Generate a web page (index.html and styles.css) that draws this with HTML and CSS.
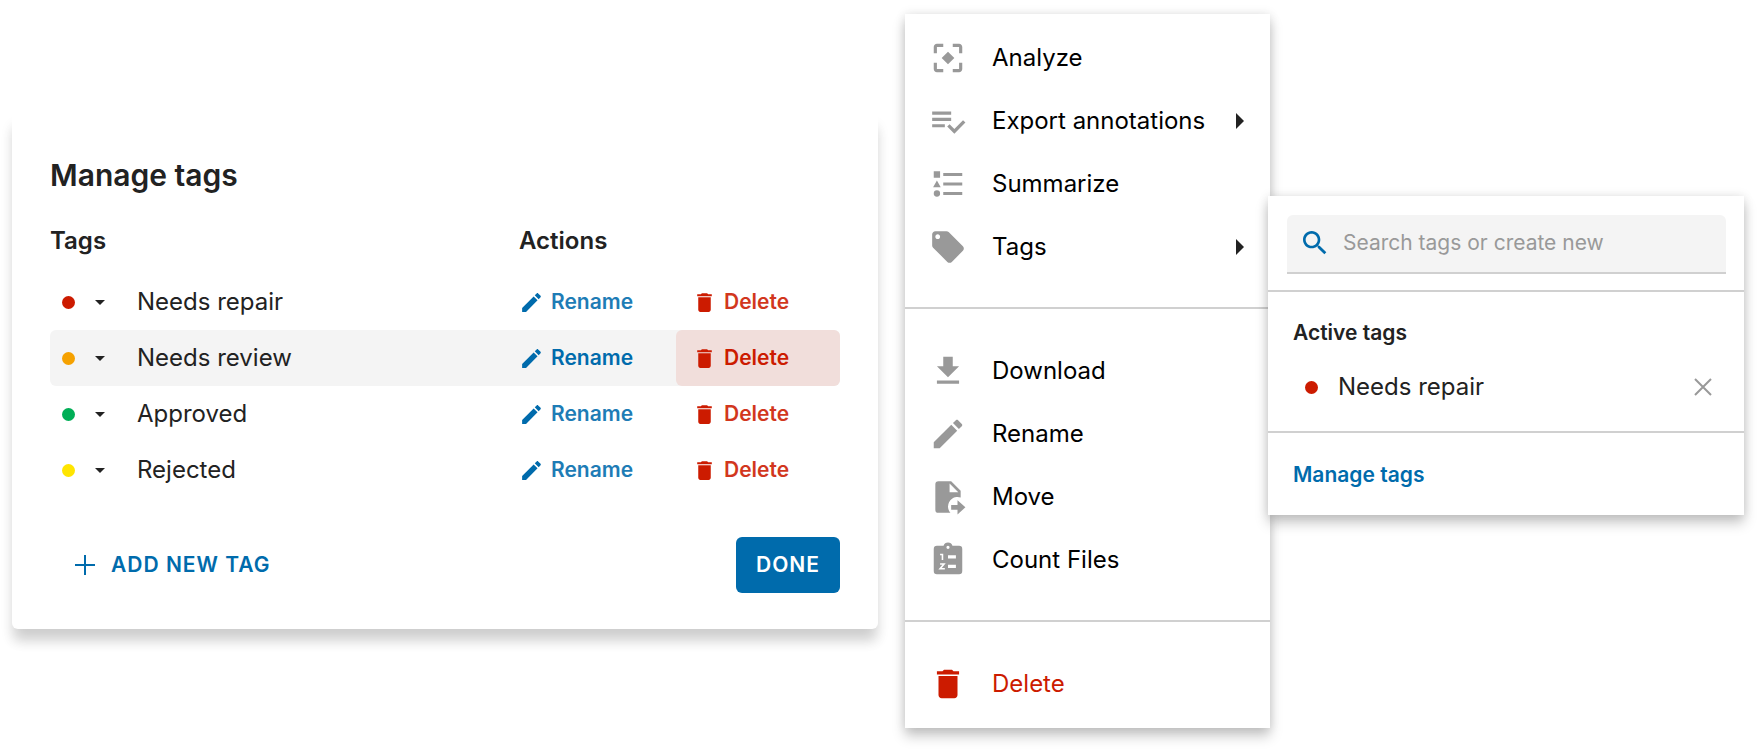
FILE: index.html
```
<!DOCTYPE html>
<html lang="en">
<head>
    <meta charset="UTF-8">
    <meta name="viewport" content="width=device-width, initial-scale=1.0">
    <title>Manage Tags</title>
    <link rel="stylesheet" href="styles.css">
</head>
<body>
    <!-- Shared icons -->
    <svg class="icon-defs" aria-hidden="true">
        <symbol id="icon-edit" viewBox="0 0 24 24"><path d="M3 17.25V21h3.75L17.81 9.94l-3.75-3.75L3 17.25zM20.71 7.04c.39-.39.39-1.02 0-1.41l-2.34-2.34c-.39-.39-1.02-.39-1.41 0l-1.83 1.83 3.75 3.75 1.83-1.83z"/></symbol>
        <symbol id="icon-delete" viewBox="0 0 24 24"><path d="M6 19c0 1.1.9 2 2 2h8c1.1 0 2-.9 2-2V7H6v12zM19 4h-3.5l-1-1h-5l-1 1H5v2h14V4z"/></symbol>
        <symbol id="icon-caret" viewBox="0 0 10 5"><path d="M0 0h10L5 5z"/></symbol>
        <symbol id="icon-arrow" viewBox="0 0 8 16"><path d="M0 0l8 8-8 8z"/></symbol>
    </svg>

    <main class="page">
        <section class="dialog" aria-labelledby="dialog-title">
            <h1 id="dialog-title" class="dialog-title">Manage tags</h1>

            <table class="tags-table">
                <colgroup>
                    <col>
                    <col class="col-rename">
                    <col class="col-delete">
                </colgroup>
                <thead>
                    <tr>
                        <th scope="col">Tags</th>
                        <th scope="col" colspan="2">Actions</th>
                    </tr>
                </thead>
                <tbody>
                    <tr>
                        <td>
                            <div class="tag-cell">
                                <button type="button" class="color-btn" aria-label="Change color"><span class="dot red"></span><svg class="caret"><use href="#icon-caret"/></svg></button>
                                <span>Needs repair</span>
                            </div>
                        </td>
                        <td><button type="button" class="action rename"><svg><use href="#icon-edit"/></svg><span>Rename</span></button></td>
                        <td><button type="button" class="action delete"><svg><use href="#icon-delete"/></svg><span>Delete</span></button></td>
                    </tr>
                    <tr class="active">
                        <td>
                            <div class="tag-cell">
                                <button type="button" class="color-btn" aria-label="Change color"><span class="dot orange"></span><svg class="caret"><use href="#icon-caret"/></svg></button>
                                <span>Needs review</span>
                            </div>
                        </td>
                        <td><button type="button" class="action rename"><svg><use href="#icon-edit"/></svg><span>Rename</span></button></td>
                        <td><button type="button" class="action delete"><svg><use href="#icon-delete"/></svg><span>Delete</span></button></td>
                    </tr>
                    <tr>
                        <td>
                            <div class="tag-cell">
                                <button type="button" class="color-btn" aria-label="Change color"><span class="dot green"></span><svg class="caret"><use href="#icon-caret"/></svg></button>
                                <span>Approved</span>
                            </div>
                        </td>
                        <td><button type="button" class="action rename"><svg><use href="#icon-edit"/></svg><span>Rename</span></button></td>
                        <td><button type="button" class="action delete"><svg><use href="#icon-delete"/></svg><span>Delete</span></button></td>
                    </tr>
                    <tr>
                        <td>
                            <div class="tag-cell">
                                <button type="button" class="color-btn" aria-label="Change color"><span class="dot yellow"></span><svg class="caret"><use href="#icon-caret"/></svg></button>
                                <span>Rejected</span>
                            </div>
                        </td>
                        <td><button type="button" class="action rename"><svg><use href="#icon-edit"/></svg><span>Rename</span></button></td>
                        <td><button type="button" class="action delete"><svg><use href="#icon-delete"/></svg><span>Delete</span></button></td>
                    </tr>
                </tbody>
            </table>

            <div class="dialog-footer">
                <button type="button" class="add-btn">
                    <svg viewBox="0 0 20 20"><path d="M9 0h2v9h9v2h-9v9H9v-9H0V9h9z"/></svg>
                    ADD NEW TAG
                </button>
                <button type="button" class="done-btn">DONE</button>
            </div>
        </section>

        <nav class="menu" aria-label="File menu">
            <button type="button" class="menu-item">
                <svg viewBox="0 0 24 24"><path d="M5 15H3v4c0 1.1.9 2 2 2h4v-2H5v-4zM5 5h4V3H5c-1.1 0-2 .9-2 2v4h2V5zm14-2h-4v2h4v4h2V5c0-1.1-.9-2-2-2zm0 16h-4v2h4c1.1 0 2-.9 2-2v-4h-2v4zM12 8l4 4-4 4-4-4z"/></svg>
                <span>Analyze</span>
            </button>
            <button type="button" class="menu-item" aria-haspopup="true">
                <svg viewBox="0 0 24 24"><path d="M14 10H2v2h12v-2zm0-4H2v2h12V6zM2 16h8v-2H2v2zm19.5-4.5L23 13l-6.99 7-4.51-4.5L13 14l3.01 3 5.49-5.5z"/></svg>
                <span>Export annotations</span>
                <svg class="arrow"><use href="#icon-arrow"/></svg>
            </button>
            <button type="button" class="menu-item">
                <svg viewBox="0 0 24 24"><path d="M3 4h4v4H3zM5 9.800l2.400 4.200H2.600zM5 16a2 2 0 1 1 0 4 2 2 0 0 1 0-4zM9 5h12v2H9zM9 11h12v2H9zM9 17h12v2H9z"/></svg>
                <span>Summarize</span>
            </button>
            <button type="button" class="menu-item" aria-haspopup="true" aria-expanded="true">
                <svg viewBox="0 0 24 24"><path d="M21.41 11.58l-9-9C12.05 2.22 11.55 2 11 2H4c-1.1 0-2 .9-2 2v7c0 .55.22 1.05.59 1.42l9 9c.36.36.86.58 1.41.58.55 0 1.05-.22 1.41-.59l7-7c.37-.36.59-.86.59-1.41 0-.55-.23-1.06-.59-1.42zM5.5 7C4.67 7 4 6.33 4 5.5S4.67 4 5.5 4 7 4.67 7 5.5 6.33 7 5.5 7z"/></svg>
                <span>Tags</span>
                <svg class="arrow"><use href="#icon-arrow"/></svg>
            </button>
            <hr>
            <button type="button" class="menu-item">
                <svg viewBox="0 0 24 24"><path d="M19 9h-4V3H9v6H5l7 7 7-7zM5 18v2h14v-2H5z"/></svg>
                <span>Download</span>
            </button>
            <button type="button" class="menu-item">
                <svg><use href="#icon-edit"/></svg>
                <span>Rename</span>
            </button>
            <button type="button" class="menu-item">
                <svg viewBox="0 0 24 24"><path d="M14 17h4v-3l5 4.500-5 4.500v-3h-4v-3M13 9h5.500L13 3.500V9M6 2h8l6 6v4.340A6 6 0 0 0 12 18c0 1.540.580 2.940 1.530 4H6a2 2 0 0 1-2-2V4a2 2 0 0 1 2-2z"/></svg>
                <span>Move</span>
            </button>
            <button type="button" class="menu-item">
                <svg viewBox="0 0 24 24">
                    <path fill-rule="evenodd" d="M19 3h-4.180a3 3 0 0 0-5.640 0H5a2 2 0 0 0-2 2v14a2 2 0 0 0 2 2h14a2 2 0 0 0 2-2V5a2 2 0 0 0-2-2zM12 3a1 1 0 1 1 0 2 1 1 0 0 1 0-2zM12 9h5v2h-5zM12 15h5v2h-5z"/>
                    <path class="digits" d="M7 8.500h1.500V12M7 14.500h2.500L7 17.500h3"/>
                </svg>
                <span>Count Files</span>
            </button>
            <hr>
            <button type="button" class="menu-item danger">
                <svg><use href="#icon-delete"/></svg>
                <span>Delete</span>
            </button>
        </nav>

        <section class="submenu" aria-label="Tags">
            <div class="search-wrap">
                <div class="search">
                    <svg viewBox="0 0 24 24" aria-hidden="true"><path d="M15.5 14h-.79l-.28-.27C15.41 12.59 16 11.11 16 9.5 16 5.910 13.090 3 9.500 3S3 5.910 3 9.500 5.910 16 9.500 16c1.610 0 3.090-.590 4.230-1.570l.270.280v.790l5 4.990L20.490 19l-4.990-5zm-6 0C7.010 14 5 11.990 5 9.500S7.010 5 9.500 5 14 7.010 14 9.500 11.990 14 9.500 14z"/></svg>
                    <input type="text" placeholder="Search tags or create new" aria-label="Search tags or create new">
                </div>
            </div>
            <div class="active-tags">
                <h2>Active tags</h2>
                <div class="active-tag">
                    <span class="dot red"></span>
                    <span>Needs repair</span>
                    <button type="button" class="remove-btn" aria-label="Remove tag"><svg viewBox="0 0 18 18"><path d="M1 1l16 16M17 1L1 17"/></svg></button>
                </div>
            </div>
            <div class="submenu-footer">
                <a href="#dialog-title">Manage tags</a>
            </div>
        </section>
    </main>
</body>
</html>
```
FILE: styles.css
```
* {
    box-sizing: border-box;
}

body {
    margin: 0;
    background-color: #fff;
    color: #222;
    font-family: Inter, Roboto, sans-serif;
    font-size: 24px;
    line-height: 32px;
}

button {
    margin: 0;
    padding: 0;
    border: none;
    background: none;
    color: inherit;
    font: inherit;
    cursor: pointer;
}

svg {
    flex: none;
    fill: currentColor;
}

.icon-defs {
    display: none;
}

.page {
    display: grid;
    grid-template-columns: 893fr 365fr 474fr;
    align-items: center;
    padding: 14px 17px 25px 12px;
}

/* Dialog */
.dialog {
    margin-right: 27px;
    padding: 42px 38px 36px;
    background-color: #fff;
    border-radius: 6px;
    box-shadow: 0 12px 14px -2px rgba(0, 0, 0, 0.16), 0 14px 12px rgba(0, 0, 0, 0.05);
}

.dialog-title {
    margin: 0 0 30px;
    font-size: 30px;
    font-weight: 600;
    line-height: 40px;
}

.tags-table {
    width: 100%;
    table-layout: fixed;
    border-collapse: collapse;
}

.col-rename {
    width: 157px;
}

.col-delete {
    width: 164px;
}

.tags-table th {
    padding: 0 0 17px;
    font-weight: 600;
    text-align: left;
}

.tags-table td {
    height: 56px;
    padding: 0;
}

.tag-cell {
    display: flex;
    align-items: center;
    padding-left: 12px;
    gap: 32px;
}

.color-btn {
    display: flex;
    align-items: center;
    gap: 20px;
}

.dot {
    width: 13px;
    height: 13px;
    border-radius: 50%;
}

.red {
    background-color: #cc1b00;
}

.orange {
    background-color: #f5a100;
}

.green {
    background-color: #00ae56;
}

.yellow {
    background-color: #ffe500;
}

.caret {
    width: 10px;
    height: 5px;
}

.action {
    display: flex;
    align-items: center;
    gap: 7px;
    width: 100%;
    height: 56px;
    font-size: 21px;
    font-weight: 600;
}

.action svg {
    width: 25px;
    height: 25px;
}

.action span {
    opacity: 0.88;
}

.rename {
    color: #006bac;
}

.delete {
    padding-left: 16px;
    border-radius: 6px;
    color: #cc1b00;
}

.active td {
    background-color: #f4f4f4;
}

.active td:first-child {
    border-radius: 6px 0 0 6px;
}

.active td:last-child {
    border-radius: 0 6px 6px 0;
}

.active .action span {
    opacity: 1;
}

.active .delete {
    background-color: #f1dedb;
}

.dialog-footer {
    display: flex;
    justify-content: space-between;
    margin-top: 39px;
}

.add-btn {
    display: flex;
    align-items: center;
    gap: 16px;
    padding-left: 25px;
    color: #006bac;
    font-size: 21px;
    font-weight: 600;
    letter-spacing: 1px;
}

.add-btn svg {
    width: 20px;
    height: 20px;
}

.done-btn {
    width: 104px;
    height: 56px;
    border-radius: 6px;
    background-color: #006bac;
    color: #fff;
    font-size: 21px;
    font-weight: 600;
    letter-spacing: 1px;
}

/* Context menu */
.menu {
    padding: 12px 0 13px;
    background-color: #fff;
    color: #000;
    box-shadow: 0 8px 12px rgba(0, 0, 0, 0.22), 0 0 10px rgba(0, 0, 0, 0.1);
}

.menu-item {
    display: flex;
    align-items: center;
    gap: 25px;
    width: 100%;
    height: 63px;
    padding: 0 26px 0 24px;
    text-align: left;
    white-space: nowrap;
}

.menu-item svg {
    width: 38px;
    height: 38px;
    color: #999;
}

.menu-item .arrow {
    width: 8px;
    height: 16px;
    margin-left: auto;
    color: #222;
}

.menu-item.danger,
.danger svg {
    color: #cc1b00;
}

.digits {
    fill: none;
    stroke: #fff;
}

.menu hr {
    height: 2px;
    margin: 29px 0 30px;
    border: none;
    background-color: #d0d0d0;
}

/* Tags submenu */
.submenu {
    align-self: start;
    margin: 182px 0 0 -2px;
    background-color: #fff;
    box-shadow: 0 8px 12px rgba(0, 0, 0, 0.22), 0 0 10px rgba(0, 0, 0, 0.1);
}

.search-wrap {
    padding: 19px 18px 16px 19px;
    border-bottom: 2px solid #d0d0d0;
}

.search {
    display: flex;
    align-items: center;
    gap: 12px;
    height: 59px;
    padding: 0 12px 2px;
    border-bottom: 2px solid #d0d0d0;
    border-radius: 6px 6px 0 0;
    background-color: #f4f4f4;
}

.search svg {
    width: 32px;
    height: 32px;
    color: #006bac;
}

.search input {
    flex: 1;
    min-width: 0;
    padding: 0;
    border: none;
    outline: none;
    background: none;
    color: #222;
    font: inherit;
    font-size: 21px;
}

.search input::placeholder {
    color: #999;
    opacity: 1;
}

.active-tags {
    padding: 25px 26px 28px 25px;
    border-bottom: 2px solid #d0d0d0;
}

.active-tags h2 {
    margin: 0 0 22px;
    font-size: 21px;
    font-weight: 600;
    line-height: 32px;
}

.active-tag {
    display: flex;
    align-items: center;
    padding-left: 12px;
    gap: 20px;
}

.remove-btn {
    display: flex;
    margin-left: auto;
    padding: 6px;
    color: #999;
}

.remove-btn svg {
    width: 18px;
    height: 18px;
    stroke: currentColor;
    stroke-width: 2;
}

.submenu-footer {
    padding: 25px 25px 24px;
}

.submenu-footer a {
    color: #006bac;
    font-size: 21px;
    font-weight: 600;
    text-decoration: none;
}
```
